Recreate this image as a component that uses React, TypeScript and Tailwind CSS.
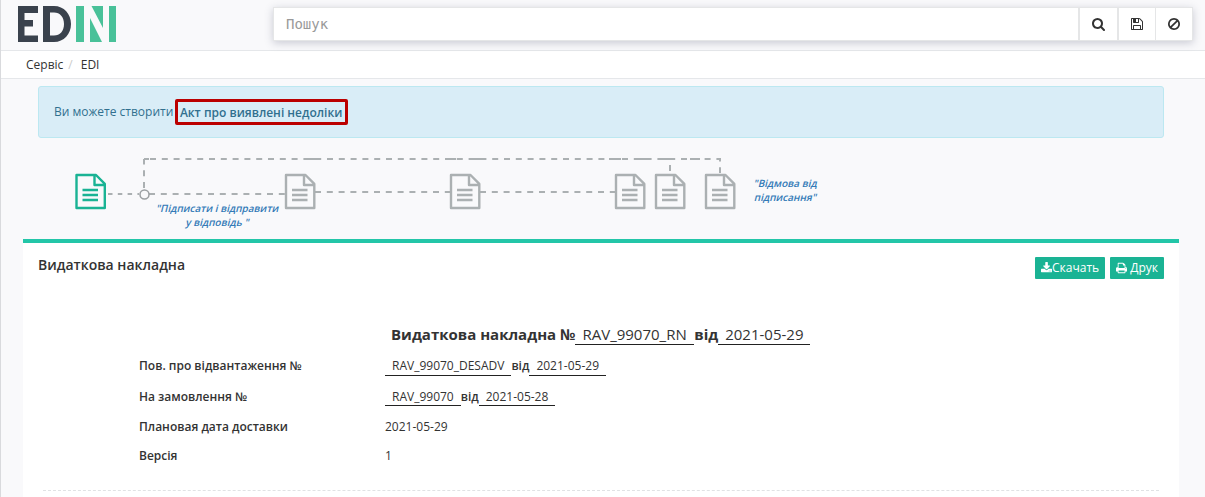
import type { ReactNode } from "react";

const icons = {
  search: { w: 1664, d: "M1152 832q0-185-131.5-316.5t-316.5-131.5-316.5 131.5-131.5 316.5 131.5 316.5 316.5 131.5 316.5-131.5 131.5-316.5zm512 832q0 52-38 90t-90 38q-54 0-90-38l-343-342q-179 124-399 124-143 0-273.500-55.500t-225-150-150-225-55.500-273.500 55.500-273.500 150-225 225-150 273.500-55.500 273.500 55.500 225 150 150 225 55.500 273.500q0 220-124 399l343 343q37 37 37 90z" },
  save: { w: 1536, d: "M384 1536h768v-384h-768v384zm896 0h128v-896q0-14-10-38.500t-20-34.500l-281-281q-10-10-34-20t-39-10v416q0 40-28 68t-68 28h-576q-40 0-68-28t-28-68v-416h-128v1280h128v-416q0-40 28-68t68-28h832q40 0 68 28t28 68v416zm-384-928v-320q0-13-9.500-22.500t-22.500-9.500h-192q-13 0-22.500 9.500t-9.500 22.500v320q0 13 9.500 22.500t22.500 9.500h192q13 0 22.500-9.500t9.500-22.500zm640 32v928q0 40-28 68t-68 28h-1344q-40 0-68-28t-28-68v-1344q0-40 28-68t68-28h928q40 0 88 20t76 48l280 280q28 28 48 76t20 88z" },
  ban: { w: 1536, d: "M1312 893q0-161-87-295l-754 753q137 89 297 89 111 0 211.500-43.500t173.500-116.500 116-174.500 43-212.500zm-999 300l755-754q-135-91-300-91-148 0-273 73t-198 199-73 274q0 162 89 299zm1223-300q0 157-61 300t-163.500 246-245 164-298.500 61-298.500-61-245-164-163.500-246-61-300 61-299.500 163.500-245.500 245-164 298.500-61 298.500 61 245 164 163.500 245.500 61 299.500z" },
  download: { w: 1664, d: "M1280 1344q0-26-19-45t-45-19-45 19-19 45 19 45 45 19 45-19 19-45zm256 0q0-26-19-45t-45-19-45 19-19 45 19 45 45 19 45-19 19-45zm128-224v320q0 40-28 68t-68 28h-1472q-40 0-68-28t-28-68v-320q0-40 28-68t68-28h465l135 136q58 56 136 56t136-56l136-136h464q40 0 68 28t28 68zm-325-569q17 41-14 70l-448 448q-18 19-45 19t-45-19l-448-448q-31-29-14-70 17-39 59-39h256v-448q0-26 19-45t45-19h256q26 0 45 19t19 45v448h256q42 0 59 39z" },
  print: { w: 1664, d: "M384 1536h896v-256h-896v256zm0-640h896v-384h-160q-40 0-68-28t-28-68v-160h-640v640zm1152 64q0-26-19-45t-45-19-45 19-19 45 19 45 45 19 45-19 19-45zm128 0v416q0 13-9.500 22.500t-22.500 9.500h-224v160q0 40-28 68t-68 28h-960q-40 0-68-28t-28-68v-160h-224q-13 0-22.500-9.500t-9.500-22.500v-416q0-79 56.500-135.500t135.500-56.500h64v-544q0-40 28-68t68-28h672q40 0 88 20t76 48l152 152q28 28 48 76t20 88v256h64q79 0 135.500 56.500t56.500 135.500z" },
};

function Icon({ name, size }: { name: keyof typeof icons; size: number }) {
  const { w, d } = icons[name];
  return (
    <svg width={(size * w) / 1792} height={size} viewBox={`0 0 ${w} 1792`} fill="currentColor" className="shrink-0">
      <path d={d} />
    </svg>
  );
}

function Logo() {
  return (
    <svg width="99" height="36" viewBox="0 0 99 36" className="block">
      <path fill="#3a424d" d="M1 0H21V7H7.500V14H16V20.500H7.500V29.500H21V36H1Z" />
      <path fill="#3a424d" fillRule="evenodd" d="M26 0H37C47 0 54 8 54 18S47 36 37 36H26ZM33 6.500V29.500H37C43 29.500 47 25 47 18S43 6.500 37 6.500Z" />
      <path fill="#49c199" d="M59 0H67V36H59ZM92 0H99V36H92ZM74.500 0H86V22ZM73 12L85 36H73Z" />
    </svg>
  );
}

function Doc({ x, color }: { x: number; color: string }) {
  return (
    <g transform={`translate(${x} 30)`} fill="none" stroke={color} strokeWidth="2.400">
      <path strokeLinejoin="round" d="M1 1H20.500L29.300 9.800V34H1ZM19 1V11H29" />
      <path d="M7 16H22.500M7 21H22.500M7 26H22.500" />
    </g>
  );
}

function Flow() {
  const gray = "#abb0b2";
  return (
    <svg width="680" height="66" viewBox="0 0 680 66" className="block">
      <g fill="none" stroke={gray} strokeWidth="2" strokeDasharray="6 5.800">
        <path d="M33 50H64" strokeDasharray="4.500 5.300" />
        <path d="M74 50H210M240 48H375M405 48H540" />
        <path d="M69 44V15" />
        <path d="M69 15H645V29M595 15V29" strokeDashoffset="-6" />
        <path strokeDasharray="none" d="M69 15H74M234 15H246M370 15H381M399 15H411M534 15H546M564 15H575M588 15H599M615 15H625" />
      </g>
      <circle cx="69.500" cy="50.500" r="4.500" fill="#f9f9fb" stroke="#9b9fa2" strokeWidth="1.500" />
      <Doc x={0.5} color="#1ab394" />
      {[210, 375, 540, 580, 630].map((x) => (
        <Doc key={x} x={x} color={gray} />
      ))}
    </svg>
  );
}

function Slanted({ children }: { children: ReactNode }) {
  return <span className="block h-[14px] -skew-x-[14deg] whitespace-nowrap">{children}</span>;
}

function Filled({ children }: { children: ReactNode }) {
  return <span className="border-b border-[#222] px-[7px]">{children}</span>;
}

export default function App() {
  return (
    <div className="h-[497px] w-[1205px] overflow-hidden border-l border-[#d9dadd] bg-[#f9f9fb] font-['Open_Sans',sans-serif] text-[12px] text-[#333]">
      <header className="flex h-[51px] items-start justify-between border-b border-[#e5e7ea] pr-3 pl-4">
        <div className="pt-1.5"><Logo /></div>
        <div className="mt-[7px] flex h-[34px] w-[920px] border border-[#e5e6e7] bg-white shadow-[0_2px_8px_rgba(60,65,95,0.25)]">
          <div className="flex-1 pt-[6px] pl-3 font-['DejaVu_Sans_Mono',monospace] text-[14px] leading-5 text-[#999]">Пошук</div>
          <button className="flex w-[39px] items-center justify-center border-l-2 border-[#e5e6e7]"><Icon name="search" size={14} /></button>
          <button className="flex w-[38px] items-center justify-center border-l-2 border-[#e5e6e7]"><Icon name="save" size={14} /></button>
          <button className="flex w-[37px] items-center justify-center border-l border-[#e5e6e7]"><Icon name="ban" size={14} /></button>
        </div>
      </header>
      <nav className="flex h-[28px] items-center border-b border-[#e5e7ea] bg-white pl-[25px]">
        <span>Сервіс</span>
        <span className="pl-[5px] text-[#ccc]">/</span>
        <span className="pl-[8px]">EDI</span>
      </nav>
      <div className="mt-[7px] ml-[37px] flex h-[52px] w-[1126px] items-center rounded-[3px] border border-[#bce8f1] bg-[#d9edf7] pl-[15px] text-[#31708f]">
        <span>Ви можете створити</span>
        <span className="ml-[1.3px] flex h-[26px] w-[173px] items-center justify-center rounded-[2px] border-[3px] border-[#bb0000] pt-0.5 font-semibold">Акт про виявлені недоліки</span>
      </div>
      <div className="relative ml-[74px] h-[101px] pt-[6px] text-center text-[10px] leading-[14px] font-semibold text-[#337ab7]">
        <Flow />
        <div className="absolute top-[63px] left-[73px] w-[140px]">
          <Slanted>"Підписати і відправити</Slanted>
          <Slanted>у відповідь "</Slanted>
        </div>
        <div className="absolute top-[38px] left-[676px] w-[70px]">
          <Slanted>"Відмова від</Slanted>
          <Slanted>підписання"</Slanted>
        </div>
      </div>
      <main className="ml-[22px] h-[258px] w-[1156px] border-t-4 border-[#23c6a8] bg-white">
        <div className="flex h-[71px] items-start justify-between pr-[15px] pl-[15px]">
          <h1 className="pt-[12px] text-[14px] leading-5 font-semibold">Видаткова накладна</h1>
          <div className="mt-[14px] flex gap-[5px] text-white">
            <button className="flex h-[22px] w-[70px] items-center justify-center rounded-[1px] bg-[#1ab394]"><Icon name="download" size={12} />Скачать</button>
            <button className="flex h-[22px] w-[54px] items-center justify-center gap-[3px] rounded-[1px] bg-[#1ab394]"><Icon name="print" size={12} />Друк</button>
          </div>
        </div>
        <h2 className="flex h-[37px] items-start pt-[10px] pl-[368px] text-[15px] leading-5">
          <b>Видаткова накладна №</b><Filled>RAV_99070_RN</Filled><b className="pl-[0.5px]">від</b><Filled>2021-05-29</Filled>
        </h2>
        <div className="grid grid-cols-[246px_1fr] grid-rows-[31px_30px_29px_29px] pl-[116px] leading-[18px]">
          <div className="pt-[6px] font-semibold">Пов. про відвантаження №</div>
          <div className="flex items-start pt-[6px]"><Filled>RAV_99070_DESADV</Filled><b className="font-semibold">від</b><Filled>2021-05-29</Filled></div>
          <div className="pt-[6px] font-semibold">На замовлення №</div>
          <div className="flex h-6 items-stretch pt-[6px]"><Filled>RAV_99070</Filled><b className="font-semibold">від</b><Filled>2021-05-28</Filled></div>
          <div className="pt-[6px] font-semibold">Плановая дата доставки</div>
          <div className="pt-[6px]">2021-05-29</div>
          <div className="pt-[6px] font-semibold">Версія</div>
          <div className="pt-[6px]">1</div>
        </div>
        <div className="mx-5 mt-[20px] border-t border-dashed border-[#e0e2e4]" />
      </main>
    </div>
  );
}
